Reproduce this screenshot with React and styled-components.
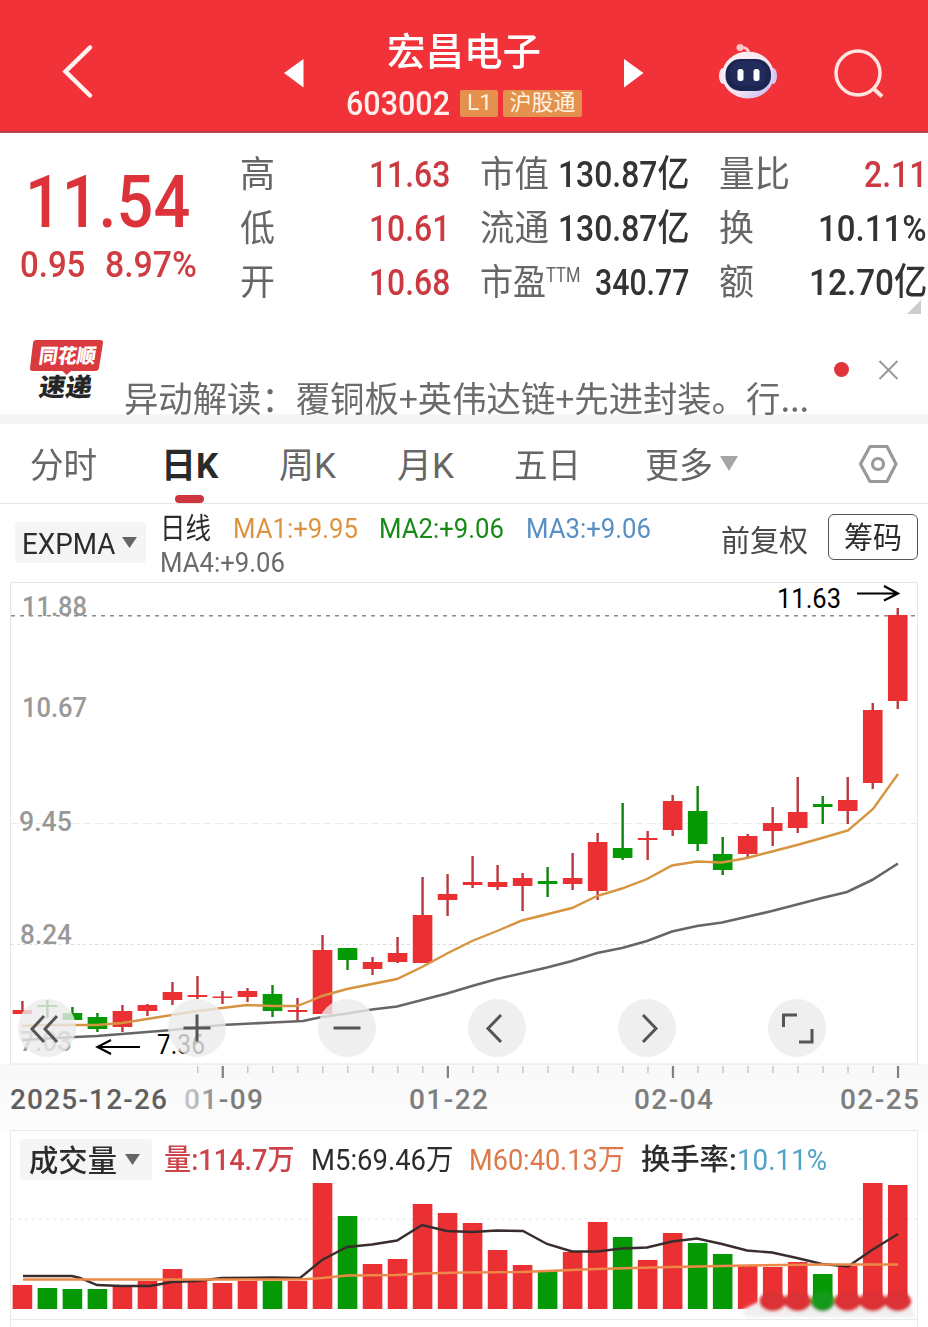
import React, { useLayoutEffect, useRef, useState } from 'react';
import styled, { createGlobalStyle, css } from 'styled-components';

const RED = '#ea3033';
const GREEN = '#059a05';
const FONT = "Roboto, 'Noto Sans CJK SC', sans-serif";

const GlobalStyle = createGlobalStyle`
  * {
    box-sizing: border-box;
  }

  body {
    margin: 0;
    background: #fff;
    font-family: ${FONT};
    overflow: hidden;
  }
`;

/* ---------- text that always fills a known width ---------- */

const FitBox = styled.span`
  display: block;
  flex: none;
  width: ${p => p.$w}px;
  height: ${p => p.$size}px;
  line-height: ${p => p.$size}px;
  font-size: ${p => p.$size}px;
  font-weight: ${p => p.$weight || 400};
  color: ${p => p.$color || 'inherit'};
  white-space: nowrap;
`;

const FitInner = styled.span`
  display: inline-block;
  vertical-align: top;
  transform-origin: 0 50%;
`;

const Fit = ({ w, size, weight, color, children }) => {
  const ref = useRef(null);
  const [scale, setScale] = useState(1);

  useLayoutEffect(() => {
    setScale(w / ref.current.offsetWidth);
  }, [w, size, children]);

  return (
    <FitBox $w={w} $size={size} $weight={weight} $color={color}>
      <FitInner ref={ref} style={{ transform: `scaleX(${scale})` }}>
        {children}
      </FitInner>
    </FitBox>
  );
};

/* ---------- header ---------- */

const Page = styled.main`
  width: 928px;
  height: 1327px;
  overflow: hidden;
`;

const Header = styled.header`
  display: grid;
  grid-template-columns: 284px 20px 320px 20px 190px 94px;
  height: 133px;
  background: #f13239;
  border-bottom: 2px solid #b9444b;
  color: #fff;
`;

const HeaderCell = styled.div`
  padding: ${p => p.$top}px 0 0 ${p => p.$left || 0}px;

  svg {
    display: block;
  }
`;

const Title = styled.div`
  display: flex;
  flex-direction: column;
  align-items: center;
  padding-top: 33px;
`;

const CodeRow = styled.div`
  display: flex;
  align-items: center;
  margin-top: 15px;
`;

const Badge = styled.span`
  display: flex;
  align-items: center;
  justify-content: center;
  width: ${p => p.$w}px;
  height: 27px;
  margin-left: ${p => p.$gap}px;
  border-radius: 2px;
  background: #e3914c;
  color: #fff3e2;
`;

/* ---------- quote ---------- */

const Quote = styled.section`
  display: flex;
  height: 187px;
  padding-top: 14px;
`;

const PriceCol = styled.div`
  width: 240px;
  padding: 19px 0 0 25px;
  color: #dc3239;
`;

const Change = styled.div`
  display: flex;
  gap: 20px;
  margin: 8px 0 0 -5px;
`;

const Stats = styled.div`
  display: grid;
  grid-template-columns: 210px 209px 208px;
  grid-template-rows: repeat(3, 54px);
  column-gap: 30px;
`;

const Stat = styled.div`
  display: flex;
  align-items: center;
  justify-content: space-between;
  color: #333;
`;

const StatLabel = styled.div`
  display: flex;
  padding-top: 2px;
  color: #666;
`;

const Corner = styled.i`
  justify-self: end;
  grid-column: 3;
  width: 14px;
  height: 14px;
  margin: -9px 6px 0 0;
  background: #ccc;
  clip-path: polygon(100% 0, 100% 100%, 0 100%);
`;

const News = styled.section`
  display: flex;
  height: 104px;
  padding-left: 28px;
  border-bottom: 10px solid #f5f5f6;
  color: #6b6b6b;

  > svg {
    flex: none;
  }
`;

const NewsText = styled.div`
  margin: 59px 0 0 19px;
  font-family: 'Noto Sans CJK SC', sans-serif;
`;

const Dot = styled.i`
  flex: none;
  width: 15px;
  height: 15px;
  margin: 42px 26px 0 25px;
  border-radius: 50%;
  background: #e0343a;
`;

/* ---------- tabs ---------- */

const Tabs = styled.nav`
  display: flex;
  height: 80px;
  padding: 0 30px 0 30px;
  border-bottom: 1px solid #e6e6e6;
`;

const Tab = styled.div`
  display: flex;
  flex-direction: column;
  align-items: center;
  justify-content: space-between;
  margin-right: ${p => p.$gap}px;
  padding-top: 25px;
  color: #666;

  ${p =>
    p.$active &&
    css`
      color: #2a2a2a;

      &::after {
        content: '';
        width: 29px;
        height: 8px;
        border-radius: 4px;
        background: #cf353f;
      }
    `}
`;

const Caret = styled.i`
  flex: none;
  width: ${p => p.$w}px;
  height: ${p => p.$h}px;
  margin: ${p => p.$top || 0}px 0 0 ${p => p.$left || 0}px;
  background: ${p => p.$color || '#666'};
  clip-path: polygon(0 0, 100% 0, 50% 100%);
`;

const Settings = styled.svg`
  margin: 20px 0 0 auto;
`;

/* ---------- indicator row ---------- */

const Indicators = styled.section`
  display: flex;
  height: 78px;
  padding-left: 15px;
`;

const Picker = styled.button`
  display: flex;
  align-items: center;
  flex: none;
  width: ${p => p.$w}px;
  height: 41px;
  margin: ${p => p.$top}px 0 0 0;
  padding: ${p => p.$drop || 0}px 0 0 ${p => p.$pad}px;
  border: 0;
  border-radius: 4px;
  background: #f5f5f5;
  color: #2c2c2c;
  font-family: inherit;
`;

const Averages = styled.div`
  display: grid;
  flex: none;
  grid-template-columns: 51px 124px 125px 124px;
  grid-template-rows: 34px 28px;
  column-gap: 22px;
  width: 575px;
  padding: 11px 0 0 14px;
`;

const Adjust = styled.div`
  flex: none;
  padding-top: 22px;
  color: #4a4a4a;
`;

const ChipButton = styled.button`
  display: flex;
  align-items: center;
  justify-content: center;
  flex: none;
  width: 90px;
  height: 46px;
  margin: 10px 0 0 20px;
  padding: 2px 0 0;
  border: 1px solid #555;
  border-radius: 6px;
  background: #fff;
  color: #2c2c2c;
  font-family: inherit;
`;

/* ---------- charts ---------- */

const ChartArea = styled.section`
  position: relative;
  height: 548px;
`;

const Plot = styled.svg`
  display: block;
  font-family: ${FONT};
`;

const Controls = styled.div`
  position: absolute;
  top: 417px;
  left: 18px;
  display: flex;
  gap: 92px;
`;

const RoundButton = styled.button`
  width: 58px;
  height: 58px;
  padding: 0;
  border: 0;
  border-radius: 50%;
  background: rgba(235, 235, 235, 0.8);

  svg {
    display: block;
  }
`;

const VolumePanel = styled.section`
  width: 908px;
  height: 190px;
  margin-left: 10px;
  border: 1px solid #e9e9e9;
`;

const VolumeHead = styled.div`
  display: flex;
  height: 50px;
  padding-left: 9px;
`;

const VolumeText = styled.div`
  display: flex;
  margin-left: ${p => p.$gap}px;
  padding-top: 15px;
`;

const NextPanel = styled.div`
  width: 908px;
  height: 10px;
  margin-left: 10px;
  border: 1px solid #e9e9e9;
  border-width: 0 1px;
`;

const stats = [
  { label: '高', lw: 35, value: '11.63', w: 81, up: true },
  { label: '市值', lw: 69, value: '130.87亿', w: 131 },
  { label: '量比', lw: 71, value: '2.11', w: 63, up: true },
  { label: '低', lw: 35, value: '10.61', w: 81, up: true },
  { label: '流通', lw: 69, value: '130.87亿', w: 131 },
  { label: '换', lw: 35, value: '10.11%', w: 109 },
  { label: '开', lw: 35, value: '10.68', w: 81, up: true },
  { label: '市盈', lw: 66, value: '340.77', w: 94, ttm: true },
  { label: '额', lw: 35, value: '12.70亿', w: 118 },
];

const tabs = [
  { name: '分时', w: 67, gap: 64 },
  { name: '日K', w: 57, gap: 61, active: true },
  { name: '周K', w: 57, gap: 61 },
  { name: '月K', w: 57, gap: 60 },
  { name: '五日', w: 67, gap: 64 },
  { name: '更多', w: 68, gap: 0 },
];

// [high, body top, body bottom, low, rising, volume top]
const candles = [
  [1001, 1010, 1014, 1014, 1, 1285],
  [1000, 1005, 1007, 1018, 0, 1288],
  [1007, 1013, 1020, 1020, 0, 1289],
  [1013, 1017, 1029, 1032, 0, 1289],
  [1005, 1011, 1027, 1032, 1, 1285],
  [1004, 1005, 1011, 1016, 1, 1281],
  [982, 992, 1000, 1005, 1, 1269],
  [976, 995, 997, 999, 1, 1281],
  [991, 996.5, 998, 1004, 1, 1283],
  [988, 991, 997, 1002, 1, 1281],
  [985, 994, 1011, 1017, 0, 1281],
  [998, 1010, 1012, 1021, 1, 1281],
  [935, 950, 1014, 1014, 1, 1183],
  [948, 948, 960, 970, 0, 1216],
  [957, 962, 969, 975, 1, 1264],
  [937, 953, 962, 963, 1, 1259],
  [877, 915, 963, 963, 1, 1204],
  [874, 894, 900, 916, 1, 1213],
  [856, 882, 885, 888, 1, 1223],
  [865, 882, 887, 890, 1, 1250],
  [873, 878, 886, 911, 1, 1265],
  [867, 881, 884, 897, 0, 1271],
  [853, 878, 884, 890, 1, 1252],
  [833, 842, 891, 900, 1, 1222],
  [803, 848, 858, 860, 0, 1237],
  [831, 838, 840, 860, 1, 1260],
  [795, 801, 830, 836, 1, 1233],
  [786, 811, 844, 851, 0, 1243],
  [837, 854, 870, 875, 0, 1254],
  [834, 836, 854, 859, 1, 1266],
  [807, 823, 831, 846, 1, 1267],
  [777, 812, 828, 833, 1, 1262],
  [796, 804, 807, 824, 0, 1274],
  [777, 800, 811, 824, 1, 1266],
  [703, 710, 783, 789, 1, 1183],
  [608, 615, 701, 709, 1, 1185],
];

const cx = i => 22.4 + 25.01 * i;

const ma1 =
  '22,1026 47,1025 75,1025 97,1025 122,1023 147,1019 172,1015 197,1011 222,1008 247,1005 272,1006 297,1006 310,1001 322,996 347,989 397,979 422,967 447,953.5 472,941 497,931 522,920.5 572,908 597,896 622,888.5 647,879 672,865.5 697,861.5 722,862.5 747,858 772,851.5 797,845 822,838 848,830.5 873,809 898,774';
const ma4 =
  '22,1040 75,1037 97,1036 147,1032 172,1030 222,1025 272,1022.5 303,1021 322,1017 347,1013.5 372,1009.5 397,1006.5 422,1000 447,993.5 472,986 497,979 547,967.5 572,961 597,953 622,948 647,941 672,931.5 697,926 722,922.5 772,911 822,898 847,892 872,880 898,863.5';
const m5 =
  '23,1276 72,1276 80,1278 97,1285 122,1286 150,1286 172,1282 197,1281 222,1278 272,1277.5 300,1278 322,1260 347,1247 372,1244.5 397,1240.5 422,1225 447,1231 472,1232 497,1230.5 523,1231 547,1244 572,1251.5 597,1251.5 622,1248.5 647,1247.5 672,1241.5 697,1238.5 722,1244 747,1250.5 772,1252.5 797,1258 822,1264 848,1266.5 872,1250 898,1234';
const m60 =
  '23,1279.5 300,1279.5 322,1278 347,1275.5 397,1275 422,1273.5 464,1272.5 522,1272 597,1269 672,1267 747,1265.5 822,1264.5 898,1264.5';

const priceLabels = [
  ['11.88', 22, 616, 65],
  ['10.67', 22, 717, 65],
  ['9.45', 19, 831, 53],
  ['8.24', 20, 944, 52],
  ['7.03', 20, 1051, 52],
];

const dateLabels = [
  ['2025-12-26', 10, 157, '#5f5f5f'],
  ['01-09', 184, 79, 'url(#fade)'],
  ['01-22', 409, 79, '#7d7d7d'],
  ['02-04', 634, 79, '#7d7d7d'],
  ['02-25', 840, 79, '#7d7d7d'],
];

const controls = [
  'M26 17 14 30l12 13M39 17 27 30l12 13',
  'M15.500 29h27M29 15.500v27',
  'M15.500 29h27',
  'M33 16 20 29.500 33 43',
  'M25 16 38 29.500 25 43',
  'M15.500 28V16h13.500M31 43h13V30',
];

const Robot = () => (
  <svg width="60" height="58" viewBox="0 0 60 58">
    <defs>
      <linearGradient id="shell" x1="0" y1="0" x2="1" y2="1">
        <stop offset="0" stopColor="#fff4f6" />
        <stop offset="0.6" stopColor="#f3e3f3" />
        <stop offset="1" stopColor="#b9b4f2" />
      </linearGradient>
    </defs>
    <path d="M22 4.500q8-1 9 6" fill="none" stroke="#ffc9cc" strokeWidth="2.500" />
    <circle cx="22" cy="4.500" r="3.500" fill="#ffc4c8" />
    <ellipse cx="5" cy="33" rx="4" ry="8" fill="#f0e3f5" />
    <ellipse cx="55" cy="33" rx="4" ry="8" fill="#d4c5f2" />
    <ellipse cx="30" cy="32" rx="26" ry="23.500" fill="url(#shell)" />
    <rect x="7.500" y="16" width="45.500" height="32" rx="15" ry="15" fill="#1c2450" />
    <rect x="12" y="18" width="36" height="25" rx="12" fill="#273062" opacity="0.600" />
    <rect x="19.500" y="26" width="6" height="12" rx="2.500" fill="#fff" />
    <rect x="35.500" y="26" width="6" height="12" rx="2.500" fill="#fff" />
  </svg>
);

const NewsLogo = () => (
  <svg width="77" height="94" viewBox="28 320 77 94" fontFamily={FONT}>
    <path
      d="M36 340h64q3.500 0 3 3l-4 25q-.5 3-4 3H71l-4.500 4-4-4H33q-3.500 0-3-3l3-25q.5-3 3-3z"
      fill="#d93a3e"
    />
    <g fontWeight="900">
      <text
        x="0"
        y="0"
        transform="translate(38 363) skewX(-8)"
        fontSize="20"
        fill="#fff"
        textLength="57"
        lengthAdjust="spacingAndGlyphs"
      >
        同花顺
      </text>
      <text
        x="0"
        y="0"
        transform="translate(38 396) skewX(-8)"
        fontSize="25"
        fill="#262626"
        textLength="53"
        lengthAdjust="spacingAndGlyphs"
      >
        速递
      </text>
    </g>
  </svg>
);

const PriceChart = () => (
  <Plot width="928" height="548" viewBox="0 582 928 548">
    <defs>
      <linearGradient id="fade">
        <stop offset="0.100" stopColor="#c4c4c4" />
        <stop offset="0.450" stopColor="#7d7d7d" />
      </linearGradient>
      <linearGradient id="axisBg" x1="0" y1="0" x2="0" y2="1">
        <stop offset="0" stopColor="#f8f8f8" />
        <stop offset="1" stopColor="#fdfdfd" />
      </linearGradient>
    </defs>
    <rect x="0" y="1064" width="928" height="66" fill="url(#axisBg)" />
    <rect x="10.500" y="582.500" width="907" height="481.500" fill="#fff" stroke="#e6e6e6" />
    <path d="M11 823.500h906" stroke="#ececec" strokeDasharray="8 4" />
    <path d="M11 944.500h906" stroke="#dcdcdc" strokeDasharray="3 3" />
    <path d="M11 615.700h906" stroke="#8a8a8a" strokeWidth="1.500" strokeDasharray="4 5" />

    {priceLabels.map(([text, x, y, w]) => (
      <text
        key={text}
        x={x}
        y={y}
        fontSize="28"
        fontWeight="500"
        fill="#999"
        textLength={w}
        lengthAdjust="spacingAndGlyphs"
      >
        {text}
      </text>
    ))}

    {candles.map(([high, top, bottom, low, rising], i) => (
      <g key={i} fill={rising ? RED : GREEN}>
        <rect
          x={cx(i) - 1.2}
          y={high}
          width="2.400"
          height={low - high}
          fill={rising ? '#b8393f' : '#0d850d'}
        />
        <rect x={cx(i) - 9.8} y={top} width="19.600" height={bottom - top} />
      </g>
    ))}

    <polyline points={ma4} fill="none" stroke="#666" strokeWidth="2.600" />
    <polyline points={ma1} fill="none" stroke="#d79440" strokeWidth="2.400" />

    <g fill="#000" fontSize="27">
      <text x="777" y="608" textLength="64" lengthAdjust="spacingAndGlyphs">
        11.63
      </text>
      <text x="157" y="1054" textLength="48" lengthAdjust="spacingAndGlyphs">
        7.36
      </text>
    </g>
    <g fill="none" stroke="#000" strokeWidth="2.200">
      <path d="M857 593.500h40M884 586l14 7.500-14 7" />
      <path d="M140 1047H98M111 1040l-13.500 7 13.500 7" />
    </g>

    {candles.map((c, i) => {
      if (i < 7) return null;
      const major = (i - 8) % 9 === 0;
      return (
        <rect
          key={i}
          x={cx(i) - (major ? 0.8 : 0.3)}
          y="1066"
          width={major ? 2.2 : 1.2}
          height={major ? 12 : 7}
          fill={major ? '#808080' : '#bbb'}
        />
      );
    })}

    {dateLabels.map(([text, x, w, color]) => (
      <text
        key={text}
        x={x}
        y="1109"
        fontSize="28"
        fontWeight="500"
        fill={color}
        textLength={w}
        lengthAdjust="spacing"
      >
        {text}
      </text>
    ))}
  </Plot>
);

const VolumeChart = () => (
  <Plot width="906" height="138" viewBox="11 1181 906 138">
    <defs>
      <filter id="soft" x="-20%" y="-40%" width="140%" height="180%">
        <feGaussianBlur stdDeviation="1.500" />
      </filter>
    </defs>
    <path d="M11 1219h906" stroke="#e6e6e6" strokeDasharray="3 4" />
    {candles.map((c, i) => (
      <rect
        key={i}
        x={cx(i) - 9.8}
        y={c[5]}
        width="19.600"
        height={(i > 29 ? 1300 : 1309) - c[5]}
        fill={c[4] ? RED : GREEN}
      />
    ))}
    <g filter="url(#soft)">
      <path d="M742 1310l16-8 152 2 6 13H746z" fill="#f0f0f0" />
      {candles.map((c, i) =>
        i < 30 ? null : (
          <ellipse
            key={i}
            cx={cx(i)}
            cy="1301.500"
            rx={c[4] ? 13.5 : 12}
            ry="10"
            fill={c[4] ? '#dc3236' : '#159a1b'}
          />
        )
      )}
    </g>
    <polyline points={m5} fill="none" stroke="#3a2c2c" strokeWidth="2.400" />
    <polyline points={m60} fill="none" stroke="#ee8848" strokeWidth="2.400" />
  </Plot>
);

const App = () => (
  <>
    <GlobalStyle />
    <Page>
      <Header>
        <HeaderCell $top={44} $left={60}>
          <svg width="36" height="56" viewBox="60 44 36 56">
            <path d="M90 47.500 65.500 71.500 90 95.500" fill="none" stroke="#fff1ef" strokeWidth="4.500" strokeLinecap="round" />
          </svg>
        </HeaderCell>
        <HeaderCell $top={59}>
          <svg width="20" height="29">
            <path d="M0 14 19.500 0v28.500z" fill="#fff" />
          </svg>
        </HeaderCell>
        <Title>
          <Fit w={154} size={38} weight={500}>
            宏昌电子
          </Fit>
          <CodeRow>
            <Fit w={104} size={34} weight={500} color="#fff0ee">
              603002
            </Fit>
            <Badge $w={38} $gap={10}>
              <Fit w={25} size={22}>
                L1
              </Fit>
            </Badge>
            <Badge $w={79} $gap={5}>
              <Fit w={66} size={22}>
                沪股通
              </Fit>
            </Badge>
          </CodeRow>
        </Title>
        <HeaderCell $top={59}>
          <svg width="20" height="29">
            <path d="M0 0 19.500 14 0 28.500z" fill="#fff" />
          </svg>
        </HeaderCell>
        <HeaderCell $top={43} $left={74}>
          <Robot />
        </HeaderCell>
        <HeaderCell $top={46}>
          <svg width="54" height="54" viewBox="834 46 54 54" fill="none" stroke="#ffe4df" strokeWidth="3.500">
            <circle cx="858" cy="73" r="22" />
            <path d="m873 88 9 8.500" strokeWidth="4" />
          </svg>
        </HeaderCell>
      </Header>

      <Quote>
        <PriceCol>
          <Fit w={165} size={73} weight={500}>
            11.54
          </Fit>
          <Change>
            <Fit w={65} size={36} weight={500} color="#cf3c42">
              0.95
            </Fit>
            <Fit w={92} size={36} weight={500} color="#cf3c42">
              8.97%
            </Fit>
          </Change>
        </PriceCol>
        <Stats>
          {stats.map(s => (
            <Stat key={s.label}>
              <StatLabel>
                <Fit w={s.lw} size={36}>
                  {s.label}
                </Fit>
                {s.ttm && (
                  <Fit w={34} size={20}>
                    TTM
                  </Fit>
                )}
              </StatLabel>
              <Fit w={s.w} size={37} weight={500} color={s.up && '#cc3a41'}>
                {s.value}
              </Fit>
            </Stat>
          ))}
          <Corner />
        </Stats>
      </Quote>

      <News>
        <NewsLogo />
        <NewsText>
          <Fit w={685} size={35}>
            异动解读：覆铜板+英伟达链+先进封装。行...
          </Fit>
        </NewsText>
        <Dot />
        <svg width="28" height="90" viewBox="875 320 28 90">
          <path d="m879.500 361 18 18m0-18-18 18" stroke="#999" strokeWidth="2" />
        </svg>
      </News>

      <Tabs>
        {tabs.map(t => (
          <Tab key={t.name} $gap={t.gap} $active={t.active}>
            <Fit w={t.w} size={35} weight={t.active ? 700 : 400}>
              {t.name}
            </Fit>
          </Tab>
        ))}
        <Caret $w={18} $h={15} $top={32} $left={7} $color="#a6a6a6" />
        <Settings width="40" height="40" viewBox="0 0 40 40" fill="none" stroke="#999" strokeWidth="3.200">
          <path d="M12 2.500h17l9 17.500-9 17.500H12L2.500 20z" strokeLinejoin="round" />
          <circle cx="20" cy="20" r="5.500" />
        </Settings>
      </Tabs>

      <Indicators>
        <Picker $w={131} $top={18} $pad={7} $drop={3}>
          <Fit w={93} size={29}>
            EXPMA
          </Fit>
          <Caret $w={15} $h={11} $left={7} $top={-3} />
        </Picker>
        <Averages>
          <Fit w={51} size={29} color="#2c2c2c">
            日线
          </Fit>
          <Fit w={125} size={28} color="#dd9440">
            MA1:+9.95
          </Fit>
          <Fit w={125} size={28} color="#188a18">
            MA2:+9.06
          </Fit>
          <Fit w={125} size={28} color="#588fc4">
            MA3:+9.06
          </Fit>
          <Fit w={125} size={28} color="#6b6b6b">
            MA4:+9.06
          </Fit>
        </Averages>
        <Adjust>
          <Fit w={87} size={30}>
            前复权
          </Fit>
        </Adjust>
        <ChipButton>
          <Fit w={58} size={30}>
            筹码
          </Fit>
        </ChipButton>
      </Indicators>

      <ChartArea>
        <PriceChart />
        <Controls>
          {controls.map(d => (
            <RoundButton key={d}>
              <svg width="58" height="58" fill="none" stroke="#555" strokeWidth="3">
                <path d={d} />
              </svg>
            </RoundButton>
          ))}
        </Controls>
      </ChartArea>

      <VolumePanel>
        <VolumeHead>
          <Picker $w={132} $top={8} $pad={9} $drop={2}>
            <Fit w={88} size={30} weight={500}>
              成交量
            </Fit>
            <Caret $w={15} $h={11} $left={8} $top={-2} />
          </Picker>
          <VolumeText $gap={12}>
            <Fit w={131} size={29} weight={500} color="#cc444a">
              量:114.7万
            </Fit>
          </VolumeText>
          <VolumeText $gap={16}>
            <Fit w={142} size={29} color="#2c2c2c">
              M5:69.46万
            </Fit>
          </VolumeText>
          <VolumeText $gap={16}>
            <Fit w={156} size={29} color="#dd7a4b">
              M60:40.13万
            </Fit>
          </VolumeText>
          <VolumeText $gap={16}>
            <Fit w={96} size={29} weight={500} color="#2c2c2c">
              换手率:
            </Fit>
            <Fit w={90} size={29} color="#4fa3c7">
              10.11%
            </Fit>
          </VolumeText>
        </VolumeHead>
        <VolumeChart />
      </VolumePanel>
      <NextPanel />
    </Page>
  </>
);

export default App;
